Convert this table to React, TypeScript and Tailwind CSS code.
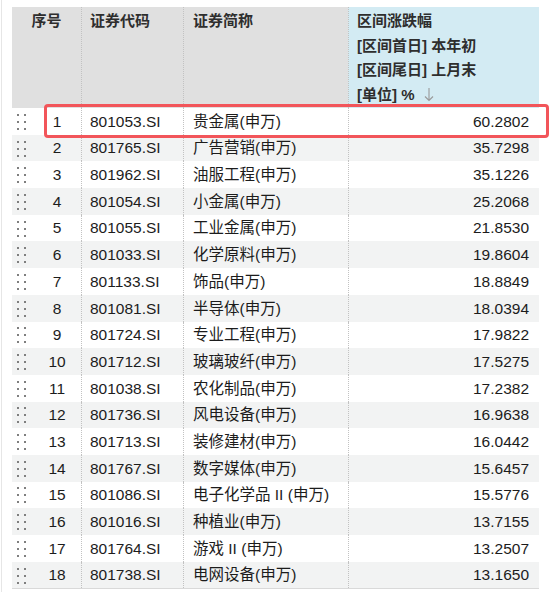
const rows = [
  ['801053.SI', '贵金属(申万)', '60.2802'],
  ['801765.SI', '广告营销(申万)', '35.7298'],
  ['801962.SI', '油服工程(申万)', '35.1226'],
  ['801054.SI', '小金属(申万)', '25.2068'],
  ['801055.SI', '工业金属(申万)', '21.8530'],
  ['801033.SI', '化学原料(申万)', '19.8604'],
  ['801133.SI', '饰品(申万)', '18.8849'],
  ['801081.SI', '半导体(申万)', '18.0394'],
  ['801724.SI', '专业工程(申万)', '17.9822'],
  ['801712.SI', '玻璃玻纤(申万)', '17.5275'],
  ['801038.SI', '农化制品(申万)', '17.2382'],
  ['801736.SI', '风电设备(申万)', '16.9638'],
  ['801713.SI', '装修建材(申万)', '16.0442'],
  ['801767.SI', '数字媒体(申万)', '15.6457'],
  ['801086.SI', '电子化学品 II (申万)', '15.5776'],
  ['801016.SI', '种植业(申万)', '13.7155'],
  ['801764.SI', '游戏 II (申万)', '13.2507'],
  ['801738.SI', '电网设备(申万)', '13.1650'],
]

// 拖拽把手：2 列 3 行的小点
function Handle() {
  return (
    <svg width="10" height="17" viewBox="0 0 10 17" className="block">
      {[
        [1, 1],
        [8, 1],
        [1, 8],
        [8, 8],
        [1, 15],
        [8, 15],
      ].map(([x, y]) => (
        <rect key={`${x}-${y}`} x={x} y={y} width="2" height="2" fill="#7f7f7f" />
      ))}
    </svg>
  )
}

function ArrowDown() {
  return (
    <svg width="10" height="15" viewBox="0 0 10 15" className="inline-block align-[-2px] ml-[9px]">
      <path d="M5 1 V13.5 M1 9.5 L5 13.5 L9 9.5" fill="none" stroke="#9a9a9a" strokeWidth="1.1" />
    </svg>
  )
}

export default function App() {
  return (
    <main
      className="w-[560px] h-[592px] bg-white overflow-hidden text-[#1c1c1c]"
      style={{ fontFamily: '"Liberation Sans", "Noto Sans CJK SC", sans-serif' }}
    >
      <div className="ml-[1px] h-full border-l border-[#e6e6e6] pl-[10px] pt-[7px]">
        <div className="relative w-[527px]">
          {/* 表头 */}
          <div className="flex h-[101px] text-[15px] font-semibold text-[#2e2e2e]">
            <div className="w-[69px] bg-[#e0e0e0] text-center pt-[2px] leading-[24.5px]">序号</div>
            <div className="w-[102px] bg-[#e0e0e0] border-l border-dotted border-[#c2c2c2] pl-[8px] pt-[2px] leading-[24.5px]">
              证券代码
            </div>
            <div className="w-[165px] bg-[#e0e0e0] border-l border-dotted border-[#c2c2c2] pl-[9px] pt-[2px] leading-[24.5px]">
              证券简称
            </div>
            <div className="w-[191px] bg-[#d3ebf3] border-l border-dotted border-[#c2c2c2] pl-[8px] pt-[2px] leading-[24.5px]">
              <div>区间涨跌幅</div>
              <div>[区间首日] 本年初</div>
              <div>[区间尾日] 上月末</div>
              <div>
                [单位] %
                <ArrowDown />
              </div>
            </div>
          </div>

          {/* 数据行 */}
          <div className="border-b border-[#d9d9d9]">
            {rows.map(([code, name, value], i) => (
              <div
                key={code}
                className={`flex h-[26.7px] items-stretch text-[15.5px] ${i % 2 === 1 ? 'bg-[#f2f3f3]' : 'bg-white'}`}
              >
                <div className="w-[21px] flex items-center pl-[4px]">
                  <Handle />
                </div>
                <div className="w-[48px] flex items-center justify-center">{i + 1}</div>
                <div className="w-[102px] flex items-center border-l border-dotted border-[#c2c2c2] pl-[8px]">
                  {code}
                </div>
                <div className="w-[165px] flex items-center border-l border-dotted border-[#c2c2c2] pl-[9px] whitespace-nowrap">
                  {name}
                </div>
                <div className="w-[191px] flex items-center justify-end border-l border-dotted border-[#c2c2c2] pr-[10px]">
                  {value}
                </div>
              </div>
            ))}
          </div>

          {/* 高亮框 */}
          <div className="absolute left-[32px] top-[97px] w-[505px] h-[34px] border-[3px] border-[#f2555a] rounded-[4px]" />
        </div>
      </div>
    </main>
  )
}
